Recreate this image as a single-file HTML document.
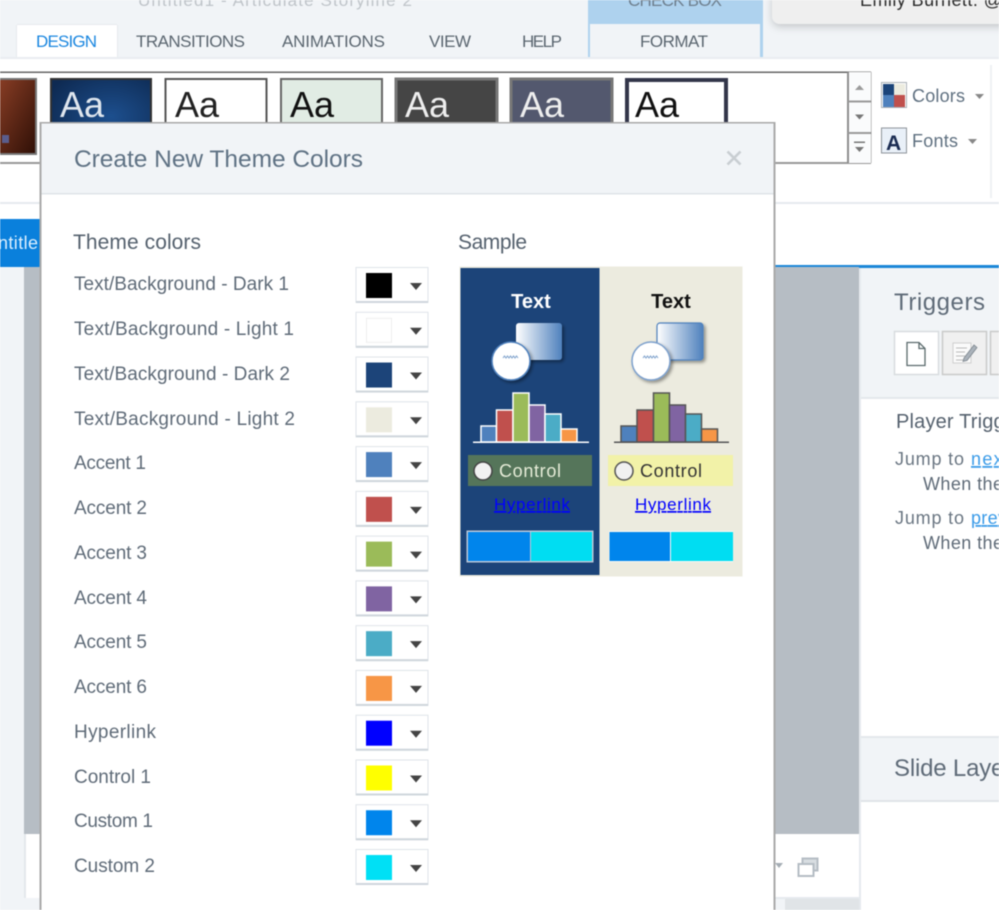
<!DOCTYPE html>
<html><head><meta charset="utf-8"><title>Create New Theme Colors</title>
<style>
html,body{margin:0;padding:0;background:#fff;width:999px;height:910px;overflow:hidden}
svg{display:block;filter:blur(.5px)}
text{font-family:"Liberation Sans",sans-serif}
.tab{font-size:17px;fill:#5b6670}
.lbl{font-size:19px;fill:#5f6b78}
.h{font-size:21px;fill:#55616e}
.aa{font-size:36px}
</style></head><body>
<svg width="999" height="910" viewBox="0 0 999 910" xmlns="http://www.w3.org/2000/svg">
<defs>
<linearGradient id="g" x1="0" x2="1" y1="0" y2="0"><stop offset="0" stop-color="#fff"/><stop offset="1" stop-color="#4f81bd"/></linearGradient>
<radialGradient id="blue" cx=".6" cy=".5" r=".7"><stop offset="0" stop-color="#1d4f8e"/><stop offset="1" stop-color="#0e2a52"/></radialGradient>
<linearGradient id="brown" x1="0" x2="1" y1="0" y2="1"><stop offset="0" stop-color="#8c3f26"/><stop offset="1" stop-color="#2e0f06"/></linearGradient>
<filter id="sh" x="-30%" y="-30%" width="170%" height="170%"><feDropShadow dx="2" dy="2" stdDeviation="1.500" flood-color="#000" flood-opacity=".4"/></filter>
<filter id="ds" x="-5%" y="-20%" width="110%" height="160%"><feDropShadow dx="0" dy="3" stdDeviation="4" flood-color="#000" flood-opacity=".18"/></filter>
</defs>

<!-- top chrome -->
<rect width="999" height="58" fill="#f1f4f7"/>
<text x="138" y="6" font-size="17" fill="#bfc4c9" textLength="274">Untitled1  -  Articulate Storyline 2</text>
<rect x="17" y="25" width="100" height="34" fill="#fff"/>
<rect x="16" y="25" width="1" height="33" fill="#e6eaee"/><rect x="117" y="25" width="1" height="33" fill="#e6eaee"/><rect x="17" y="24" width="100" height="1" fill="#e6eaee"/>
<text class="tab" x="36" y="47" textLength="61" style="fill:#1b87e0">DESIGN</text>
<text class="tab" x="136" y="47" textLength="109">TRANSITIONS</text>
<text class="tab" x="282" y="47" textLength="103">ANIMATIONS</text>
<text class="tab" x="429" y="47" textLength="42">VIEW</text>
<text class="tab" x="522" y="47" textLength="40">HELP</text>
<rect x="588" y="0" width="175" height="58" fill="#aed2ee"/>
<rect x="590" y="24" width="170" height="34" fill="#f1f4f7"/>
<text x="628" y="6" font-size="17" fill="#6e7f8e" textLength="94">CHECK BOX</text>
<text class="tab" x="640" y="47" textLength="68">FORMAT</text>
<rect x="772" y="-10" width="240" height="34" rx="8" fill="#efefef" filter="url(#ds)"/>
<text x="860" y="6" font-size="18" fill="#2a2a2a" textLength="142">Emily Burnett: @</text>

<!-- ribbon -->
<rect x="0" y="58" width="999" height="144" fill="#fff"/>
<rect x="0" y="57" width="999" height="2" fill="#e9edf1"/>
<rect x="0" y="202" width="999" height="2" fill="#e6eaee"/>
<rect x="990" y="65" width="2" height="133" fill="#eef1f4"/>
<rect x="-2" y="72" width="873" height="91" fill="#fff" stroke="none"/>
<rect x="0" y="71.500" width="871" height="1.500" fill="#666"/>
<rect x="0" y="162" width="871" height="2" fill="#999"/>
<rect x="870" y="72" width="1.500" height="91" fill="#888"/>
<rect x="847" y="72" width="24" height="91" fill="#fafbfc"/>
<rect x="847" y="72" width="2" height="91" fill="#8e8e8e"/>
<rect x="848" y="100.500" width="23" height="2" fill="#9a9a9a"/>
<rect x="848" y="132" width="23" height="2" fill="#9a9a9a"/>
<path d="M855 90l4.500-5 4.500 5z" fill="#9b9b9b"/>
<path d="M855 114.500h9l-4.500 5z" fill="#777"/>
<path d="M854 141.500h11v1.500h-11z" fill="#777"/><path d="M855 147h9l-4.500 5z" fill="#777"/>

<!-- gallery thumbnails -->
<rect x="-4" y="79" width="40" height="75" fill="url(#brown)" stroke="#777" stroke-width="2"/>
<rect x="2" y="135" width="7" height="8" fill="#5a5d8c"/>
<rect x="51" y="79" width="100" height="75" fill="url(#blue)" stroke="#333" stroke-width="2"/>
<text class="aa" x="60" y="117" fill="#dfe6ee">Aa</text>
<rect x="165.500" y="79" width="101" height="75" fill="#fff" stroke="#555" stroke-width="2"/>
<text class="aa" x="175" y="117" fill="#222">Aa</text>
<rect x="281" y="79" width="101" height="75" fill="#e1ece4" stroke="#666" stroke-width="2"/>
<text class="aa" x="290" y="117" fill="#111">Aa</text>
<rect x="396" y="79" width="101" height="75" fill="#454545" stroke="#777" stroke-width="3"/>
<text class="aa" x="405" y="117" fill="#eee">Aa</text>
<rect x="511" y="79" width="101" height="75" fill="#53586e" stroke="#777" stroke-width="3"/>
<text class="aa" x="520" y="117" fill="#eee">Aa</text>
<rect x="627" y="80" width="99" height="75" fill="#fff" stroke="#33364a" stroke-width="4"/>
<text class="aa" x="635" y="117" fill="#111">Aa</text>

<!-- colors and fonts -->
<rect x="881.500" y="82.500" width="25" height="25" fill="#fff" stroke="#aab0b6"/>
<rect x="883" y="84" width="11" height="11" fill="#1c4479"/><rect x="894" y="84" width="11" height="11" fill="#ecebdf"/>
<rect x="883" y="95" width="11" height="12" fill="#4f81bd"/><rect x="894" y="95" width="11" height="12" fill="#c0504d"/>
<text x="912" y="102" font-size="18" fill="#5f7080" textLength="53">Colors</text>
<path d="M975 94h9l-4.500 5z" fill="#888"/>
<rect x="881.500" y="128" width="25" height="25" fill="#e9f0f8" stroke="#8e949a"/>
<text x="886" y="150" font-size="21" font-weight="bold" fill="#1b2c52">A</text>
<text x="912" y="147" font-size="18" fill="#5f7080" textLength="46">Fonts</text>
<path d="M968 139h9l-4.500 5z" fill="#888"/>

<!-- workspace behind dialog -->
<rect x="0" y="204" width="999" height="63" fill="#fff"/>
<rect x="0" y="219" width="40" height="48" fill="#0a80dc"/>
<text x="-2" y="249" font-size="18" fill="#dcefff" textLength="40">ntitle</text>
<rect x="775" y="265" width="224" height="3" fill="#1b87d8"/>
<rect x="0" y="267" width="24" height="643" fill="#f1f4f7"/>
<rect x="24" y="267" width="16" height="567" fill="#b6bdc4"/>
<rect x="24" y="834" width="16" height="64" fill="#fff"/>
<rect x="24" y="834" width="2" height="76" fill="#e4e8ec"/>
<rect x="24" y="898" width="16" height="12" fill="#f1f4f7"/>
<rect x="775" y="267" width="84" height="567" fill="#b6bdc4"/>
<rect x="775" y="834" width="84" height="64" fill="#fff"/>
<rect x="775" y="898" width="10" height="12" fill="#f1f4f7"/>
<rect x="785" y="898" width="74" height="12" fill="#e0e4e7"/>
<rect x="775" y="897" width="84" height="2" fill="#e6eaee"/>
<path d="M775 863h8l-4 5z" fill="#a5adb4"/>
<rect x="802.500" y="858.500" width="15" height="12" fill="#d8dde1" stroke="#b5bdc4" stroke-width="2"/>
<rect x="798.500" y="864" width="15" height="12" fill="#fff" stroke="#b5bdc4" stroke-width="2"/>

<!-- right panel -->
<rect x="859" y="268" width="140" height="642" fill="#fff"/>
<rect x="859" y="268" width="2" height="642" fill="#e6eaee"/>
<rect x="861" y="268" width="138" height="130" fill="#f1f4f7"/>
<rect x="861" y="397" width="138" height="2" fill="#e4e8ec"/>
<text x="894" y="310" font-size="24" fill="#5f6b78" textLength="91">Triggers</text>
<rect x="894.500" y="331.500" width="44" height="43" fill="#fff" stroke="#d8dcdf" stroke-width="1.500"/>
<path d="M907 342.500v23h18v-17l-6-6z M919 342.500v6h6" fill="#fff" stroke="#5a6a6c" stroke-width="1.300"/>
<rect x="942.500" y="331.500" width="44" height="43" fill="#f0f0f0" stroke="#c9c9c9" stroke-width="1.500"/>
<rect x="953" y="343" width="18" height="20" fill="#fafafa" stroke="#cfcfcf"/>
<path d="M956 348h11M956 352h9M956 356h9M956 360h9" stroke="#bbb"/>
<path d="M964 358l10-13 3 2.500-10 13-4 1z" fill="#aab2ba" stroke="#7d868e" stroke-width=".8"/>
<rect x="990.500" y="331.500" width="20" height="43" fill="#f0f0f0" stroke="#c9c9c9" stroke-width="1.500"/>
<text x="896" y="428" font-size="20" fill="#55616e" textLength="137">Player Triggers</text>
<text x="895" y="465" font-size="18" fill="#6a7682" textLength="69">Jump to</text>
<text x="971" y="465" font-size="18" fill="#3a9be8" text-decoration="underline" textLength="38">next</text>
<text x="923" y="490" font-size="18" fill="#5f6b78" textLength="80">When the</text>
<text x="895" y="524" font-size="18" fill="#6a7682" textLength="69">Jump to</text>
<text x="971" y="524" font-size="18" fill="#3a9be8" text-decoration="underline" textLength="70">previous</text>
<text x="923" y="549" font-size="18" fill="#5f6b78" textLength="80">When the</text>
<rect x="861" y="737" width="138" height="64" fill="#f1f4f7"/>
<rect x="861" y="736" width="138" height="2" fill="#e4e8ec"/>
<rect x="861" y="800" width="138" height="2" fill="#e0e4e8"/>
<text x="894" y="776" font-size="24" fill="#5f6b78" textLength="130">Slide Layers</text>

<!-- dialog -->
<rect x="40" y="122" width="735" height="800" fill="#fff"/>
<rect x="41" y="123" width="733" height="70" fill="#f1f4f7"/>
<rect x="41" y="193" width="733" height="1.500" fill="#dfe4e8"/>
<rect x="40" y="122" width="735" height="1.500" fill="#a9a9a9"/>
<rect x="39.500" y="122" width="2" height="788" fill="#a9a9a9"/>
<rect x="773.500" y="122" width="2" height="788" fill="#a9a9a9"/>
<text x="74" y="167" font-size="24.500" fill="#5f7284" textLength="289">Create New Theme Colors</text>
<path d="M727.500 151.500l13 13M740.500 151.500l-13 13" stroke="#c9ced2" stroke-width="2.600"/>

<text class="h" x="73" y="249" textLength="128">Theme colors</text>
<text class="h" x="458" y="249" textLength="69">Sample</text>

<text class="lbl" x="74" y="290" textLength="215">Text/Background - Dark 1</text>
<text class="lbl" x="74" y="335" textLength="220">Text/Background - Light 1</text>
<text class="lbl" x="74" y="380" textLength="216">Text/Background - Dark 2</text>
<text class="lbl" x="74" y="425" textLength="221">Text/Background - Light 2</text>
<text class="lbl" x="74" y="469" textLength="72">Accent 1</text>
<text class="lbl" x="74" y="514" textLength="73">Accent 2</text>
<text class="lbl" x="74" y="559" textLength="73">Accent 3</text>
<text class="lbl" x="74" y="604" textLength="73">Accent 4</text>
<text class="lbl" x="74" y="648" textLength="73">Accent 5</text>
<text class="lbl" x="74" y="693" textLength="73">Accent 6</text>
<text class="lbl" x="74" y="738" textLength="82">Hyperlink</text>
<text class="lbl" x="74" y="783" textLength="77">Control 1</text>
<text class="lbl" x="74" y="827" textLength="79">Custom 1</text>
<text class="lbl" x="74" y="872" textLength="81">Custom 2</text>

<!-- select template rows -->
<g id="rows" stroke="none">
<g transform="translate(0,0)"><rect x="356" y="267.500" width="72" height="35" fill="#fff" stroke="#dfe4e9"/><rect x="356" y="301" width="72" height="2" fill="#cfd6dc"/><rect x="366" y="273" width="26" height="25" fill="#000"/><path d="M410 283h12l-6 7z" fill="#444"/></g>
<g transform="translate(0,44.770)"><rect x="356" y="267.500" width="72" height="35" fill="#fff" stroke="#dfe4e9"/><rect x="356" y="301" width="72" height="2" fill="#cfd6dc"/><rect x="366.500" y="273.500" width="25" height="24" fill="#fff" stroke="#eeeeee"/><path d="M410 283h12l-6 7z" fill="#444"/></g>
<g transform="translate(0,89.540)"><rect x="356" y="267.500" width="72" height="35" fill="#fff" stroke="#dfe4e9"/><rect x="356" y="301" width="72" height="2" fill="#cfd6dc"/><rect x="366" y="273" width="26" height="25" fill="#1c4479"/><path d="M410 283h12l-6 7z" fill="#444"/></g>
<g transform="translate(0,134.310)"><rect x="356" y="267.500" width="72" height="35" fill="#fff" stroke="#dfe4e9"/><rect x="356" y="301" width="72" height="2" fill="#cfd6dc"/><rect x="366" y="273" width="26" height="25" fill="#ecebdf"/><path d="M410 283h12l-6 7z" fill="#444"/></g>
<g transform="translate(0,179.080)"><rect x="356" y="267.500" width="72" height="35" fill="#fff" stroke="#dfe4e9"/><rect x="356" y="301" width="72" height="2" fill="#cfd6dc"/><rect x="366" y="273" width="26" height="25" fill="#4f81bd"/><path d="M410 283h12l-6 7z" fill="#444"/></g>
<g transform="translate(0,223.850)"><rect x="356" y="267.500" width="72" height="35" fill="#fff" stroke="#dfe4e9"/><rect x="356" y="301" width="72" height="2" fill="#cfd6dc"/><rect x="366" y="273" width="26" height="25" fill="#c0504d"/><path d="M410 283h12l-6 7z" fill="#444"/></g>
<g transform="translate(0,268.620)"><rect x="356" y="267.500" width="72" height="35" fill="#fff" stroke="#dfe4e9"/><rect x="356" y="301" width="72" height="2" fill="#cfd6dc"/><rect x="366" y="273" width="26" height="25" fill="#9bbb59"/><path d="M410 283h12l-6 7z" fill="#444"/></g>
<g transform="translate(0,313.390)"><rect x="356" y="267.500" width="72" height="35" fill="#fff" stroke="#dfe4e9"/><rect x="356" y="301" width="72" height="2" fill="#cfd6dc"/><rect x="366" y="273" width="26" height="25" fill="#8064a2"/><path d="M410 283h12l-6 7z" fill="#444"/></g>
<g transform="translate(0,358.160)"><rect x="356" y="267.500" width="72" height="35" fill="#fff" stroke="#dfe4e9"/><rect x="356" y="301" width="72" height="2" fill="#cfd6dc"/><rect x="366" y="273" width="26" height="25" fill="#4bacc6"/><path d="M410 283h12l-6 7z" fill="#444"/></g>
<g transform="translate(0,402.930)"><rect x="356" y="267.500" width="72" height="35" fill="#fff" stroke="#dfe4e9"/><rect x="356" y="301" width="72" height="2" fill="#cfd6dc"/><rect x="366" y="273" width="26" height="25" fill="#f79646"/><path d="M410 283h12l-6 7z" fill="#444"/></g>
<g transform="translate(0,447.700)"><rect x="356" y="267.500" width="72" height="35" fill="#fff" stroke="#dfe4e9"/><rect x="356" y="301" width="72" height="2" fill="#cfd6dc"/><rect x="366" y="273" width="26" height="25" fill="#0000ff"/><path d="M410 283h12l-6 7z" fill="#444"/></g>
<g transform="translate(0,492.470)"><rect x="356" y="267.500" width="72" height="35" fill="#fff" stroke="#dfe4e9"/><rect x="356" y="301" width="72" height="2" fill="#cfd6dc"/><rect x="366" y="273" width="26" height="25" fill="#ffff00"/><path d="M410 283h12l-6 7z" fill="#444"/></g>
<g transform="translate(0,537.240)"><rect x="356" y="267.500" width="72" height="35" fill="#fff" stroke="#dfe4e9"/><rect x="356" y="301" width="72" height="2" fill="#cfd6dc"/><rect x="366" y="273" width="26" height="25" fill="#0085ec"/><path d="M410 283h12l-6 7z" fill="#444"/></g>
<g transform="translate(0,582.010)"><rect x="356" y="267.500" width="72" height="35" fill="#fff" stroke="#dfe4e9"/><rect x="356" y="301" width="72" height="2" fill="#cfd6dc"/><rect x="366" y="273" width="26" height="25" fill="#00e0f5"/><path d="M410 283h12l-6 7z" fill="#444"/></g>
</g>

<!-- sample -->
<rect x="459.500" y="266.500" width="283" height="310" fill="#ecebdf"/>
<rect x="460.500" y="268" width="139" height="307" fill="#1c4479"/>

<text x="531" y="308" font-size="20" font-weight="bold" fill="#fff" text-anchor="middle">Text</text>
<rect x="516" y="323" width="46" height="37" rx="3" fill="url(#g)" filter="url(#sh)"/>
<circle cx="511" cy="361" r="19" fill="#fff" stroke="#4f81bd" stroke-width="1.500" filter="url(#sh)"/>
<path d="M503 358l1.500-2 1.500 2 1.500-2 1.500 2 1.500-2 1.500 2 1.500-2 1.500 2 1.500-2 1.500 2" fill="none" stroke="#7fa2cc"/>
<g stroke="#fff" stroke-width="1.500">
<rect x="481" y="426" width="15.500" height="16" fill="#4f81bd"/>
<rect x="496.500" y="410" width="16.500" height="32" fill="#c0504d"/>
<rect x="513" y="393" width="16" height="49" fill="#9bbb59"/>
<rect x="529" y="405" width="16" height="37" fill="#8064a2"/>
<rect x="545" y="414" width="16" height="28" fill="#4bacc6"/>
<rect x="561" y="429" width="16" height="13" fill="#f79646"/>
</g>
<rect x="473" y="441.500" width="116" height="1.500" fill="#fff"/>
<rect x="468" y="455" width="124" height="31" fill="#55755a"/>
<circle cx="483" cy="471" r="9" fill="#f1f1f1" stroke="#444" stroke-width="1.500"/>
<text x="499" y="477" font-size="18" fill="#e6ecd8" textLength="62">Control</text>
<text x="494" y="510" font-size="17" fill="#0000ff" text-decoration="underline" textLength="76">Hyperlink</text>
<rect x="466.500" y="530.500" width="127" height="32" fill="#fff" opacity=".7"/>
<rect x="468" y="532" width="62" height="29" fill="#0085ec"/>
<rect x="531" y="532" width="61" height="29" fill="#00ddf2"/>

<text x="671" y="308" font-size="20" font-weight="bold" fill="#111" text-anchor="middle">Text</text>
<rect x="657" y="323" width="46" height="37" rx="3" fill="url(#g)" stroke="#4f81bd" stroke-width="1.200" filter="url(#sh)"/>
<circle cx="651" cy="361" r="19" fill="#fff" stroke="#7ea1cd" stroke-width="1.500" filter="url(#sh)"/>
<path d="M643 358l1.500-2 1.500 2 1.500-2 1.500 2 1.500-2 1.500 2 1.500-2 1.500 2 1.500-2 1.500 2" fill="none" stroke="#7fa2cc"/>
<g stroke="#555" stroke-width="1.500">
<rect x="621" y="426" width="16" height="16" fill="#4f81bd"/>
<rect x="637" y="410" width="16.500" height="32" fill="#c0504d"/>
<rect x="653.500" y="393" width="16" height="49" fill="#9bbb59"/>
<rect x="669.500" y="405" width="16" height="37" fill="#8064a2"/>
<rect x="685.500" y="414" width="16" height="28" fill="#4bacc6"/>
<rect x="701.500" y="429" width="16" height="13" fill="#f79646"/>
</g>
<rect x="614" y="441.500" width="115" height="1.500" fill="#555"/>
<rect x="608" y="455" width="125" height="31" fill="#f2f2a8"/>
<circle cx="624" cy="471" r="9" fill="#f1f1f1" stroke="#555" stroke-width="1.500"/>
<text x="640" y="477" font-size="18" fill="#333" textLength="62">Control</text>
<text x="635" y="510" font-size="17" fill="#0000ff" text-decoration="underline" textLength="76">Hyperlink</text>
<rect x="609" y="531" width="124" height="31" fill="#fff" opacity=".7"/>
<rect x="609.500" y="532" width="60.500" height="29" fill="#0085ec"/>
<rect x="671" y="532" width="62" height="29" fill="#00ddf2"/>
</svg>
</body></html>
